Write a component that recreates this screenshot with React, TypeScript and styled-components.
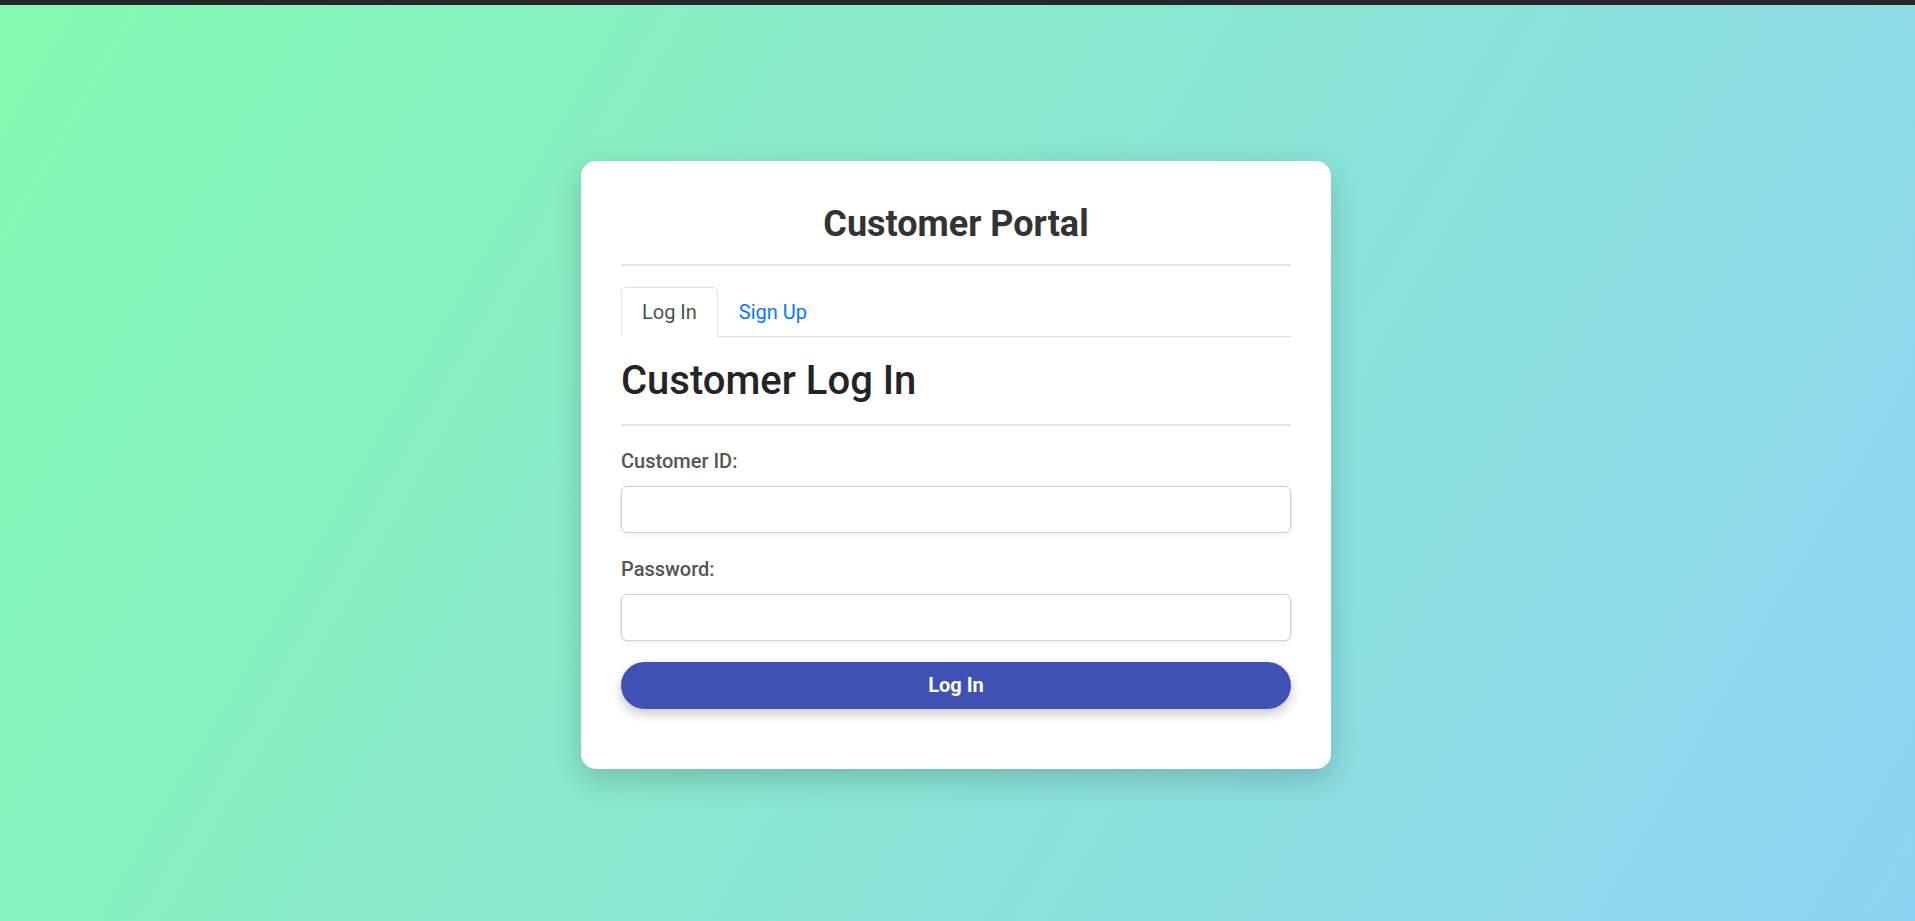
import React, { useState } from "react";
import styled, { createGlobalStyle } from "styled-components";

const GlobalStyle = createGlobalStyle`
  html, body { margin: 0; padding: 0; }
  body {
    font-family: Roboto, "Liberation Sans", Arial, sans-serif;
    font-size: 20px;
    color: #212529;
  }
  * { box-sizing: border-box; }
`;

const Page = styled.div`
  display: flex;
  flex-direction: column;
  height: 921px;
`;

const TopBar = styled.div`
  height: 5px;
  flex: none;
  background: #27262b;
`;

const Main = styled.main`
  flex: 1;
  display: flex;
  align-items: center;
  justify-content: center;
  padding: 3px 3px 0 0;
  background: linear-gradient(120deg, #84fab0 0%, #8fd3f4 100%);
`;

const Card = styled.div`
  width: 750px;
  background: #fff;
  border-radius: 15px;
  padding: 40px;
  box-shadow: 0 10px 30px rgba(0, 0, 0, 0.18);
`;

const Header = styled.div`
  padding-top: 2px;
  padding-bottom: 19px;
  border-bottom: 2px solid #e5e5e5;
  margin-bottom: 21px;
`;

const Title = styled.h1`
  margin: 0;
  text-align: center;
  font-size: 36px;
  line-height: 42px;
  font-weight: 700;
  color: #333;
`;

const Tabs = styled.ul`
  display: flex;
  list-style: none;
  margin: 0;
  padding: 0;
  border-bottom: 1px solid #dee2e6;
`;

const Tab = styled.li<{ $active?: boolean }>`
  margin-bottom: -1px;
  padding: 9px 20px;
  font-size: 20px;
  line-height: 30px;
  cursor: pointer;
  border: 1px solid ${(p) => (p.$active ? "#dee2e6" : "transparent")};
  border-bottom-color: ${(p) => (p.$active ? "#fff" : "transparent")};
  border-radius: 5px 5px 0 0;
  background: ${(p) => (p.$active ? "#fff" : "transparent")};
  color: ${(p) => (p.$active ? "#495057" : "#007bff")};
`;

const SectionTitle = styled.h2`
  margin: 20px 0 0;
  padding-bottom: 19px;
  border-bottom: 2px solid #e5e5e5;
  font-size: 40px;
  line-height: 48px;
  font-weight: 500;
  color: #212529;
`;

const Form = styled.form`
  display: flex;
  flex-direction: column;
  margin-top: 20px;
`;

const Field = styled.div`
  display: flex;
  flex-direction: column;
  gap: 10px;
  margin-bottom: 21px;
`;

const Label = styled.label`
  font-size: 20px;
  line-height: 30px;
  font-weight: 500;
  color: #555;
`;

const Input = styled.input`
  height: 47px;
  width: 100%;
  padding: 0 15px;
  font-family: inherit;
  font-size: 20px;
  border: 1px solid #cfd0d6;
  border-radius: 6px;
  background: #fff;
  box-shadow: 0 2px 6px rgba(0, 0, 0, 0.07);
  outline: none;
`;

const Button = styled.button`
  height: 47px;
  width: 100%;
  border: none;
  border-radius: 24px;
  background: #3f51b5;
  color: #fff;
  font-family: inherit;
  font-size: 20px;
  font-weight: 700;
  cursor: pointer;
  box-shadow: 0 5px 12px rgba(0, 0, 0, 0.22);
  margin-bottom: 20px;
`;

export default function App() {
  const [tab, setTab] = useState<"login" | "signup">("login");
  return (
    <>
      <GlobalStyle />
      <Page>
        <TopBar />
        <Main>
          <Card>
            <Header>
              <Title>Customer Portal</Title>
            </Header>
            <Tabs>
              <Tab $active={tab === "login"} onClick={() => setTab("login")}>
                Log In
              </Tab>
              <Tab $active={tab === "signup"} onClick={() => setTab("signup")}>
                Sign Up
              </Tab>
            </Tabs>
            <SectionTitle>Customer Log In</SectionTitle>
            <Form onSubmit={(e) => e.preventDefault()}>
              <Field>
                <Label htmlFor="cid">Customer ID:</Label>
                <Input id="cid" type="text" />
              </Field>
              <Field>
                <Label htmlFor="pwd">Password:</Label>
                <Input id="pwd" type="password" />
              </Field>
              <Button type="submit">Log In</Button>
            </Form>
          </Card>
        </Main>
      </Page>
    </>
  );
}
